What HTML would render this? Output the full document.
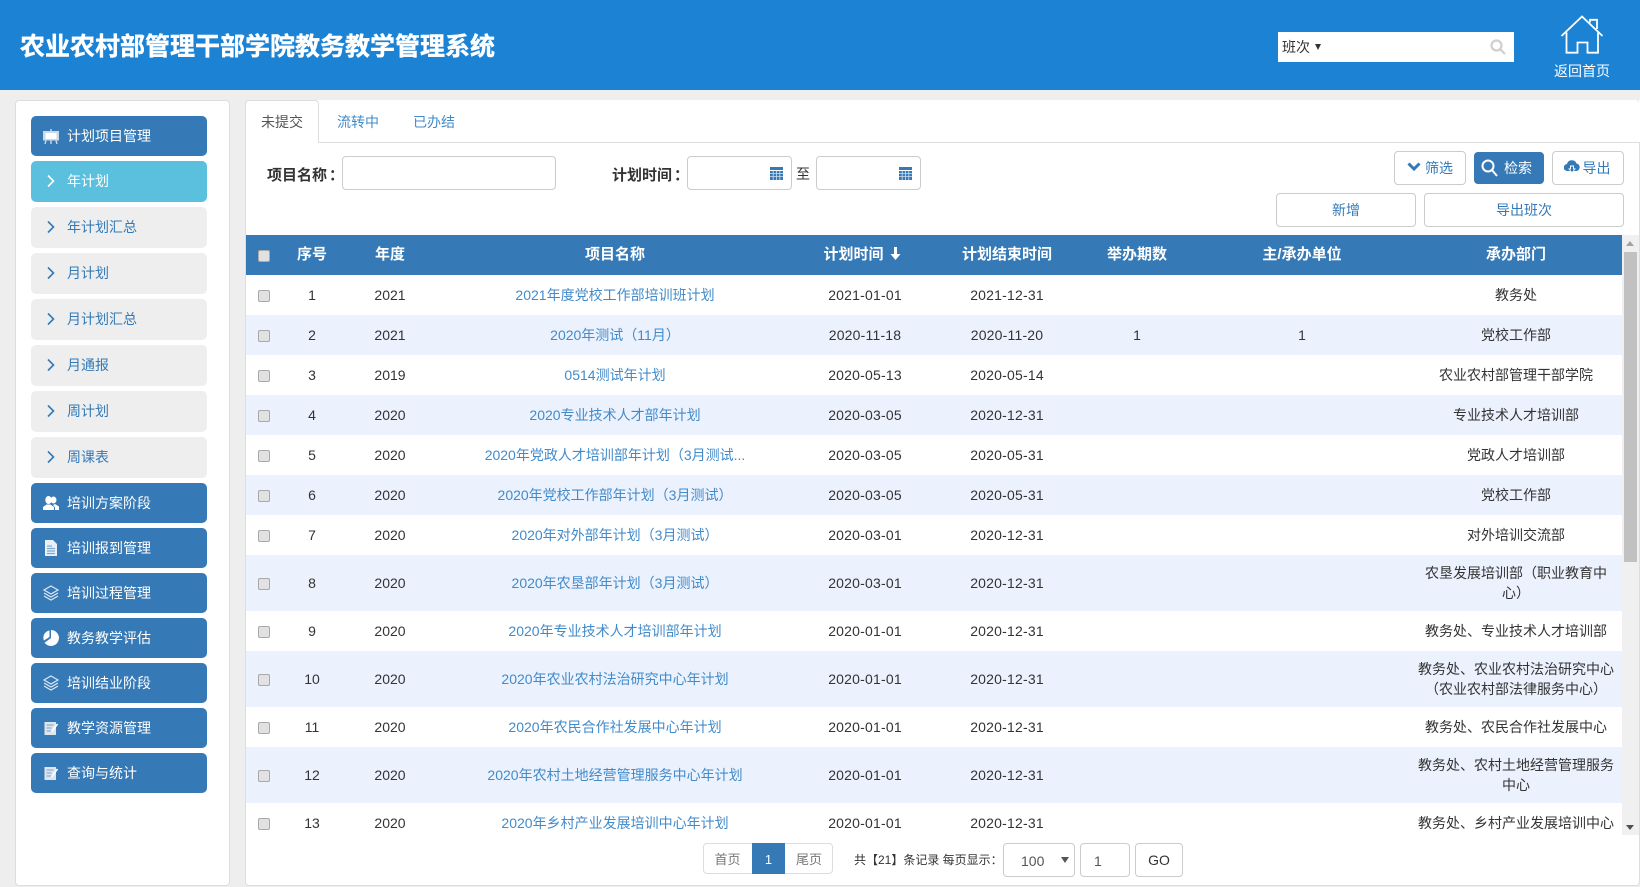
<!DOCTYPE html>
<html lang="zh-CN">
<head>
<meta charset="utf-8">
<title>农业农村部管理干部学院教务教学管理系统</title>
<style>
*{box-sizing:border-box;margin:0;padding:0}
html,body{width:1640px;height:887px;overflow:hidden;background:#eee}
body{position:relative;font-family:"Liberation Sans","WenQuanYi Zen Hei","Noto Sans CJK SC",sans-serif;font-size:14px;color:#333}
.abs,.nav,.box,.btn{position:absolute}
#hd{left:0;top:0;width:1640px;height:90px;background:#1c82d4;position:absolute}
#title{position:absolute;left:20px;top:30px;font:bold 25px/34px "Liberation Sans","Noto Sans CJK SC",sans-serif;-webkit-text-stroke:.4px #fff;color:#fff;white-space:nowrap}
#srch{position:absolute;left:1278px;top:32px;width:236px;height:30px;background:#fff}
#side{position:absolute;left:15px;top:100px;width:215px;height:786px;background:#fff;border:1px solid #ddd;border-radius:4px}
#main{position:absolute;left:245px;top:100px;width:1395px;height:786px;background:#fff;border:1px solid #ddd;border-top:0;border-radius:4px}
.nav{left:31px;width:176px;height:40px;line-height:41px;border-radius:5px;background:#3579b6;color:#fff;padding-left:36px;white-space:nowrap}
.nav.s{height:41px;line-height:41px;background:#eee;color:#337ab7}
.nav.a{background:#5bc0de;color:#fff}
.nav svg{position:absolute;left:12px;top:12px;width:16px;height:16px}
.box{background:#fff;border:1px solid #ccc;border-radius:4px}
.btn{background:#fff;border:1px solid #ccc;border-radius:4px;color:#337ab7;text-align:center;white-space:nowrap}
.lb{position:absolute;font-weight:bold;font-size:15px;white-space:nowrap;line-height:20px}
#tbl{position:absolute;left:246px;top:235px;width:1376px;height:600px;overflow:hidden;background:#fff}
.r{position:absolute;left:0;width:1376px}
.r.z{background:#ebf1fd}
.r.h{background:#3579b6;color:#fff;font-weight:bold;font-size:15px}
.r>div{position:absolute;top:0;height:100%;display:flex;align-items:center;justify-content:center;text-align:center;line-height:20px;white-space:nowrap}
.r>.ck{left:12px;width:12px}
.ck i{display:block;width:12px;height:12px;margin-top:2px;background:#e1e1e1;border:1px solid #a9a9a9;border-radius:2px}
.c1{left:36px;width:60px}.c2{left:104px;width:80px}.c3{left:219px;width:300px;color:#428bca}
.h .c3{color:#fff}
.c4{left:569px;width:100px;letter-spacing:.2px}.c5{left:711px;width:100px;letter-spacing:.2px}.c6{left:851px;width:80px}.c7{left:1006px;width:100px}.c8{left:1170px;width:200px}
.h .c4,.h .c5{letter-spacing:0}
#sb{position:absolute;left:1622px;top:235px;width:17px;height:600px;background:#f0f0f0}
#sb b{position:absolute;left:2px;top:17px;width:13px;height:310px;background:#c1c1c1}
.tri{position:absolute;width:0;height:0;border-left:4px solid transparent;border-right:4px solid transparent}
</style>
</head>
<body>
<div id="hd">
  <div id="title">农业农村部管理干部学院教务教学管理系统</div>
  <div id="srch">
    <span style="position:absolute;left:4px;top:5px;line-height:20px;color:#333">班次</span>
    <span class="tri" style="left:37px;top:12px;border-left-width:3px;border-right-width:3px;border-top:6px solid #333"></span>
    <svg style="position:absolute;left:212px;top:7px" width="16" height="16" viewBox="0 0 16 16" fill="none" stroke="#cfcfcf" stroke-width="2.2"><circle cx="6.5" cy="6.5" r="5"/><path d="M10 10l5 5"/></svg>
  </div>
  <svg style="position:absolute;left:1558px;top:13px" width="48" height="44" viewBox="0 0 48 44" fill="none" stroke="#fff" stroke-width="1.8"><path d="M3.5 23L24 3.5 44.5 23"/><path d="M32 9.5V6.8h7V16"/><path d="M8.500 19.500V39.700H19.500V29.500H29.500V39.700H40V19.500"/></svg>
  <div style="position:absolute;left:1554px;top:61px;color:#fff;line-height:20px;white-space:nowrap">返回首页</div>
</div>

<div id="side"></div>
<div class="nav" style="top:116px"><svg viewBox="0 0 16 16"><path fill="#c9d9ea" d="M0 3h16v9.500H0z"/><path fill="#fff" d="M2.500 5h11v6h-11z"/><path stroke="#c9d9ea" stroke-width="1.400" d="M8 1v2M3 12.500L2 16M13 12.500l1 3.500M8 12.500V16"/></svg>计划项目管理</div>
<div class="nav s a" style="top:161px"><svg viewBox="0 0 16 16" fill="none" stroke="#fff" stroke-width="1.600"><path d="M5 2.500L10.500 8 5 13.500"/></svg>年计划</div>
<div class="nav s" style="top:207px"><svg viewBox="0 0 16 16" fill="none" stroke="#337ab7" stroke-width="1.600"><path d="M5 2.500L10.500 8 5 13.500"/></svg>年计划汇总</div>
<div class="nav s" style="top:253px"><svg viewBox="0 0 16 16" fill="none" stroke="#337ab7" stroke-width="1.600"><path d="M5 2.500L10.500 8 5 13.500"/></svg>月计划</div>
<div class="nav s" style="top:299px"><svg viewBox="0 0 16 16" fill="none" stroke="#337ab7" stroke-width="1.600"><path d="M5 2.500L10.500 8 5 13.500"/></svg>月计划汇总</div>
<div class="nav s" style="top:345px"><svg viewBox="0 0 16 16" fill="none" stroke="#337ab7" stroke-width="1.600"><path d="M5 2.500L10.500 8 5 13.500"/></svg>月通报</div>
<div class="nav s" style="top:391px"><svg viewBox="0 0 16 16" fill="none" stroke="#337ab7" stroke-width="1.600"><path d="M5 2.500L10.500 8 5 13.500"/></svg>周计划</div>
<div class="nav s" style="top:437px"><svg viewBox="0 0 16 16" fill="none" stroke="#337ab7" stroke-width="1.600"><path d="M5 2.500L10.500 8 5 13.500"/></svg>周课表</div>
<div class="nav" style="top:483px"><svg viewBox="0 0 16 16" fill="#fff"><path d="M10.500 1.500a3 3.500 0 0 1 0 7 3 3.500 0 0 1 0-7zM12 9l4 2.500V15h-4v-2.500L10 10z"/><path d="M5.500 1a3.200 4 0 0 1 0 8 3.200 4 0 0 1 0-8zM3.500 9.500h4L11 12v3H0v-3z"/></svg>培训方案阶段</div>
<div class="nav" style="top:528px"><svg viewBox="0 0 16 16"><path fill="#e8f0f8" d="M2 0h8l4 4v12H2z"/><path stroke="#7fa9d2" stroke-width="1.200" d="M4 6h5M4 8.500h8M4 11h8M4 13.500h8"/></svg>培训报到管理</div>
<div class="nav" style="top:573px"><svg viewBox="0 0 16 16" fill="none" stroke="#dbe7f3" stroke-width="1.200"><path d="M8 1l7 4-7 4-7-4z"/><path d="M1 8l7 4 7-4"/><path d="M1 11l7 4 7-4"/></svg>培训过程管理</div>
<div class="nav" style="top:618px"><svg viewBox="0 0 16 16" fill="#fff"><path d="M8 0a8 8 0 1 1-6.500 12.700L8 8z"/><path d="M6.500.5V7L.9 10.500A7.300 7.300 0 0 1 6.500.5z"/></svg>教务教学评估</div>
<div class="nav" style="top:663px"><svg viewBox="0 0 16 16" fill="none" stroke="#dbe7f3" stroke-width="1.200"><path d="M8 1l7 4-7 4-7-4z"/><path d="M1 8l7 4 7-4"/><path d="M1 11l7 4 7-4"/></svg>培训结业阶段</div>
<div class="nav" style="top:708px"><svg viewBox="0 0 16 16"><path fill="#dde6ef" d="M1.500 2h11.500v13H1.500z"/><path stroke="#7fa0c4" stroke-width="1.100" d="M3.500 5h7M3.500 8h5M3.500 11h5"/><path stroke="#fff" stroke-width="1.600" d="M8.500 12l6-8"/></svg>教学资源管理</div>
<div class="nav" style="top:753px"><svg viewBox="0 0 16 16"><path fill="#dde6ef" d="M1.500 2h11.500v13H1.500z"/><path stroke="#7fa0c4" stroke-width="1.100" d="M3.500 5h7M3.500 8h5M3.500 11h5"/><path stroke="#fff" stroke-width="1.600" d="M8.500 12l6-8"/></svg>查询与统计</div>

<div id="main"></div>
<div class="abs" style="left:1639px;top:100px;width:1px;height:42px;background:#fff"></div>
<div class="abs" style="left:246px;top:142px;width:1394px;height:1px;background:#ddd"></div>
<div class="abs" style="left:245px;top:100px;width:74px;height:43px;background:#fff;border:1px solid #ddd;border-bottom:0;border-radius:4px 4px 0 0"></div>
<div class="abs" style="left:261px;top:112px;line-height:20px;color:#555">未提交</div>
<div class="abs" style="left:337px;top:112px;line-height:20px;color:#428bca">流转中</div>
<div class="abs" style="left:413px;top:112px;line-height:20px;color:#428bca">已办结</div>

<div class="lb" style="left:267px;top:166px">项目名称<span style="margin-left:2px">：</span></div>
<div class="box" style="left:342px;top:156px;width:214px;height:34px"></div>
<div class="lb" style="left:612px;top:166px">计划时间<span style="margin-left:2px">：</span></div>
<div class="box" style="left:687px;top:156px;width:105px;height:34px"></div>
<svg class="abs" style="left:770px;top:166px" width="13" height="14" viewBox="0 0 13 14"><path fill="#3579b6" d="M0 1h13v3H0z"/><path fill="#3579b6" d="M0 5h13v9H0z"/><path stroke="#cfe0f0" stroke-width=".8" d="M0 7.500h13M0 10.500h13M3.200 5v9M6.500 5v9M9.800 5v9"/></svg>
<div class="abs" style="left:796px;top:164px;line-height:20px">至</div>
<div class="box" style="left:816px;top:156px;width:105px;height:34px"></div>
<svg class="abs" style="left:899px;top:166px" width="13" height="14" viewBox="0 0 13 14"><path fill="#3579b6" d="M0 1h13v3H0z"/><path fill="#3579b6" d="M0 5h13v9H0z"/><path stroke="#cfe0f0" stroke-width=".8" d="M0 7.500h13M0 10.500h13M3.200 5v9M6.500 5v9M9.800 5v9"/></svg>

<div class="btn" style="left:1394px;top:151px;width:72px;height:34px;line-height:33px;padding-left:18px">筛选</div>
<svg class="abs" style="left:1407px;top:162px" width="14" height="10" viewBox="0 0 14 10" fill="none" stroke="#337ab7" stroke-width="3"><path d="M1.500 1.500L7 7l5.500-5.500"/></svg>
<div class="btn" style="left:1474px;top:152px;width:70px;height:32px;line-height:31px;background:#3579b6;border-color:#3579b6;color:#fff;padding-left:18px">检索</div>
<svg class="abs" style="left:1481px;top:159px" width="17" height="18" viewBox="0 0 17 18" fill="none" stroke="#fff" stroke-width="2"><circle cx="7" cy="7" r="5.500"/><path d="M11 11l5 6"/></svg>
<div class="btn" style="left:1552px;top:151px;width:72px;height:34px;line-height:33px;padding-left:17px">导出</div>
<svg class="abs" style="left:1564px;top:160px" width="16" height="15" viewBox="0 0 16 15"><path fill="#337ab7" d="M3.500 11A3.500 3.500 0 0 1 3 4 5 5 0 0 1 12.500 3.500 3.800 3.800 0 0 1 12.500 11z"/><path fill="#fff" d="M6 5.500h4v3h2L8 13 4 8.500h2z"/><path fill="#337ab7" d="M7 6.500h2v3h1.300L8 12 5.700 9.500H7z"/></svg>
<div class="btn" style="left:1276px;top:193px;width:140px;height:34px;line-height:32px">新增</div>
<div class="btn" style="left:1424px;top:193px;width:200px;height:34px;line-height:32px">导出班次</div>

<div id="tbl">
  <div class="r h" style="top:0;height:40px"><div class="ck"><i></i></div><div class="c1">序号</div><div class="c2">年度</div><div class="c3">项目名称</div><div class="c4" style="left:566px">计划时间<svg style="margin:-3px 0 0 6px" width="11" height="13" viewBox="0 0 11 13" fill="#fff"><path d="M4 0h3v7h3.500L5.500 13 .5 7H4z"/></svg></div><div class="c5">计划结束时间</div><div class="c6">举办期数</div><div class="c7">主/承办单位</div><div class="c8">承办部门</div></div>
  <div class="r" style="top:40px;height:40px"><div class="ck"><i></i></div><div class="c1">1</div><div class="c2">2021</div><div class="c3">2021年度党校工作部培训班计划</div><div class="c4">2021-01-01</div><div class="c5">2021-12-31</div><div class="c6"></div><div class="c7"></div><div class="c8">教务处</div></div>
  <div class="r z" style="top:80px;height:40px"><div class="ck"><i></i></div><div class="c1">2</div><div class="c2">2021</div><div class="c3">2020年测试（11月）</div><div class="c4">2020-11-18</div><div class="c5">2020-11-20</div><div class="c6">1</div><div class="c7">1</div><div class="c8">党校工作部</div></div>
  <div class="r" style="top:120px;height:40px"><div class="ck"><i></i></div><div class="c1">3</div><div class="c2">2019</div><div class="c3">0514测试年计划</div><div class="c4">2020-05-13</div><div class="c5">2020-05-14</div><div class="c6"></div><div class="c7"></div><div class="c8">农业农村部管理干部学院</div></div>
  <div class="r z" style="top:160px;height:40px"><div class="ck"><i></i></div><div class="c1">4</div><div class="c2">2020</div><div class="c3">2020专业技术人才部年计划</div><div class="c4">2020-03-05</div><div class="c5">2020-12-31</div><div class="c6"></div><div class="c7"></div><div class="c8">专业技术人才培训部</div></div>
  <div class="r" style="top:200px;height:40px"><div class="ck"><i></i></div><div class="c1">5</div><div class="c2">2020</div><div class="c3">2020年党政人才培训部年计划（3月测试...</div><div class="c4">2020-03-05</div><div class="c5">2020-05-31</div><div class="c6"></div><div class="c7"></div><div class="c8">党政人才培训部</div></div>
  <div class="r z" style="top:240px;height:40px"><div class="ck"><i></i></div><div class="c1">6</div><div class="c2">2020</div><div class="c3">2020年党校工作部年计划（3月测试）</div><div class="c4">2020-03-05</div><div class="c5">2020-05-31</div><div class="c6"></div><div class="c7"></div><div class="c8">党校工作部</div></div>
  <div class="r" style="top:280px;height:40px"><div class="ck"><i></i></div><div class="c1">7</div><div class="c2">2020</div><div class="c3">2020年对外部年计划（3月测试）</div><div class="c4">2020-03-01</div><div class="c5">2020-12-31</div><div class="c6"></div><div class="c7"></div><div class="c8">对外培训交流部</div></div>
  <div class="r z" style="top:320px;height:56px"><div class="ck"><i></i></div><div class="c1">8</div><div class="c2">2020</div><div class="c3">2020年农垦部年计划（3月测试）</div><div class="c4">2020-03-01</div><div class="c5">2020-12-31</div><div class="c6"></div><div class="c7"></div><div class="c8"><span>农垦发展培训部（职业教育中<br>心）</span></div></div>
  <div class="r" style="top:376px;height:40px"><div class="ck"><i></i></div><div class="c1">9</div><div class="c2">2020</div><div class="c3">2020年专业技术人才培训部年计划</div><div class="c4">2020-01-01</div><div class="c5">2020-12-31</div><div class="c6"></div><div class="c7"></div><div class="c8">教务处、专业技术人才培训部</div></div>
  <div class="r z" style="top:416px;height:56px"><div class="ck"><i></i></div><div class="c1">10</div><div class="c2">2020</div><div class="c3">2020年农业农村法治研究中心年计划</div><div class="c4">2020-01-01</div><div class="c5">2020-12-31</div><div class="c6"></div><div class="c7"></div><div class="c8"><span>教务处、农业农村法治研究中心<br>（农业农村部法律服务中心）</span></div></div>
  <div class="r" style="top:472px;height:40px"><div class="ck"><i></i></div><div class="c1">11</div><div class="c2">2020</div><div class="c3">2020年农民合作社发展中心年计划</div><div class="c4">2020-01-01</div><div class="c5">2020-12-31</div><div class="c6"></div><div class="c7"></div><div class="c8">教务处、农民合作社发展中心</div></div>
  <div class="r z" style="top:512px;height:56px"><div class="ck"><i></i></div><div class="c1">12</div><div class="c2">2020</div><div class="c3">2020年农村土地经营管理服务中心年计划</div><div class="c4">2020-01-01</div><div class="c5">2020-12-31</div><div class="c6"></div><div class="c7"></div><div class="c8"><span>教务处、农村土地经营管理服务<br>中心</span></div></div>
  <div class="r" style="top:568px;height:40px"><div class="ck"><i></i></div><div class="c1">13</div><div class="c2">2020</div><div class="c3">2020年乡村产业发展培训中心年计划</div><div class="c4">2020-01-01</div><div class="c5">2020-12-31</div><div class="c6"></div><div class="c7"></div><div class="c8">教务处、乡村产业发展培训中心</div></div>
</div>
<div id="sb"><b></b><span class="tri" style="left:4px;top:6px;border-bottom:5px solid #a3a3a3"></span><span class="tri" style="left:4px;top:590px;border-top:5px solid #505050"></span></div>

<div class="abs" style="left:703px;top:843px;width:130px;height:31px;border:1px solid #ddd;border-radius:4px;background:#fff"></div>
<div class="abs" style="left:703px;top:843px;width:49px;height:31px;line-height:34px;text-align:center;font-size:13px;color:#777">首页</div>
<div class="abs" style="left:752px;top:843px;width:33px;height:31px;line-height:33px;text-align:center;font-size:13px;background:#3579b6;color:#fff">1</div>
<div class="abs" style="left:785px;top:843px;width:48px;height:31px;line-height:34px;text-align:center;font-size:13px;color:#777">尾页</div>
<div class="abs" style="left:854px;top:850px;line-height:20px;font-size:12px;white-space:nowrap;width:142px;overflow:hidden">共【21】条记录 每页显示：</div>
<div class="box" style="left:1003px;top:843px;width:72px;height:34px;line-height:34px;padding-left:17px;color:#555">100</div>
<span class="tri" style="left:1061px;top:857px;border-top:6px solid #555"></span>
<div class="box" style="left:1080px;top:843px;width:50px;height:34px;line-height:34px;padding-left:13px;color:#555">1</div>
<div class="box" style="left:1135px;top:843px;width:48px;height:34px;line-height:32px;text-align:center">GO</div>
</body>
</html>
